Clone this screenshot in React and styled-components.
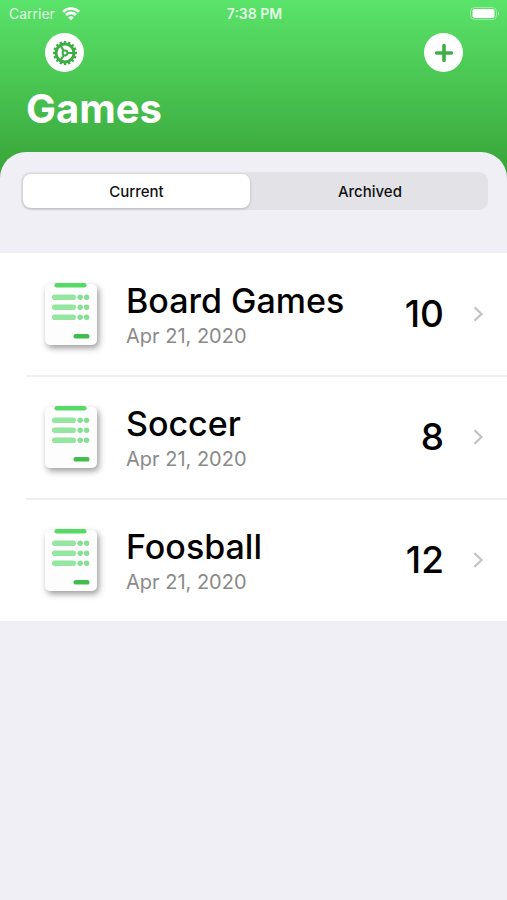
import * as React from "react";
import styled, { createGlobalStyle } from "styled-components";

const GlobalStyle = createGlobalStyle`
    * {
        box-sizing: border-box;
    }
    body {
        margin: 0;
        background: #f0eff5;
        font-family: Inter, "Liberation Sans", sans-serif;
        color: #000;
    }
`;

const Screen = styled.div`
    min-height: 100vh;
    display: flex;
    flex-direction: column;
    background: linear-gradient(#5ae36a, #37a337 178px);
`;

const StatusBar = styled.div`
    display: grid;
    grid-template-columns: 1fr auto 1fr;
    align-items: center;
    height: 28px;
    padding: 0 7px 0 9px;
    color: rgba(255, 255, 255, 0.85);
    font-size: 14px;
    line-height: 20px;
`;

const Carrier = styled.div`
    display: flex;
    align-items: center;
    gap: 7px;
`;

const Clock = styled.time`
    font-weight: 600;
`;

const Battery = styled.svg`
    justify-self: end;
`;

const Toolbar = styled.nav`
    display: flex;
    justify-content: space-between;
    padding: 5px 44px 0 45px;
`;

const RoundButton = styled.button`
    display: flex;
    align-items: center;
    justify-content: center;
    width: 39px;
    height: 39px;
    padding: 0;
    border: none;
    border-radius: 50%;
    background: #fff;
    color: #3fad45;
    cursor: pointer;
`;

const Title = styled.h1`
    margin: 0;
    padding: 13px 26px 19px;
    font-size: 40px;
    line-height: 48px;
    font-weight: 700;
    color: #fff;
`;

const Sheet = styled.main`
    flex: 1;
    padding-top: 20px;
    border-radius: 26px 26px 0 0;
    background: #f0eff5;
`;

const Segments = styled.div`
    display: flex;
    gap: 4px;
    height: 38px;
    margin: 0 19px 43px 21px;
    padding: 2px;
    border-radius: 9px;
    background: #e3e2e7;
`;

const Segment = styled.button`
    flex: ${(props) => (props.$active ? "0 0 49%" : "1")};
    padding: 0;
    border: none;
    border-radius: 8px;
    background: ${(props) => (props.$active ? "#fff" : "transparent")};
    box-shadow: ${(props) => (props.$active ? "0 1px 3px rgba(0, 0, 0, 0.2)" : "none")};
    font-family: inherit;
    font-size: 15px;
    font-weight: 500;
    color: #111;
    cursor: pointer;
`;

const GameList = styled.ul`
    margin: 0;
    padding: 0;
    list-style: none;
    background: #fff;
`;

const GameItem = styled.li`
    & + & > a::before {
        content: "";
        position: absolute;
        top: -1px;
        left: 26px;
        right: 0;
        height: 2px;
        background: #f0f0f1;
    }
`;

const GameLink = styled.a`
    position: relative;
    display: flex;
    align-items: center;
    height: 122px;
    margin-bottom: 1px;
    padding: 0 22px 0 35px;
    color: inherit;
    text-decoration: none;
`;

const GameText = styled.div`
    flex: 1;
    margin-left: 18px;
`;

const GameName = styled.h2`
    margin: 0;
    font-size: 34px;
    line-height: 44px;
    font-weight: 500;
`;

const GameDate = styled.p`
    margin: 0;
    font-size: 20px;
    line-height: 26px;
    color: #8a8a8a;
`;

const Count = styled.span`
    margin-right: 27px;
    font-size: 37px;
    line-height: 44px;
    font-weight: 500;
`;

function WifiIcon() {
    return (
        <svg width="18" height="14" viewBox="0 0 18 14" fill="none" stroke="#fff" strokeWidth="2.6" aria-hidden="true">
            <path d="M1 4.8C5.4.4 12.6.4 17 4.8" />
            <path d="M4 8c2.8-2.8 7.2-2.8 10 0" />
            <path d="M6.2 10.4c1.6-1.5 4-1.5 5.6 0L9 13.2z" fill="#fff" stroke="none" />
        </svg>
    );
}

function BatteryIcon() {
    return (
        <Battery width="30" height="14" viewBox="0 0 30 14" role="img" aria-label="Battery full">
            <rect x="0.5" y="0.5" width="26" height="12" rx="4" fill="none" stroke="#fff" strokeOpacity="0.4" />
            <rect x="2.5" y="2" width="22" height="9" rx="2" fill="#fff" />
            <path d="M28 4.5c1.6.5 1.6 3.5 0 4z" fill="#fff" fillOpacity="0.5" />
        </Battery>
    );
}

function GearIcon() {
    const teeth = Array.from({ length: 16 }, (_, i) => i * 22.5);
    return (
        <svg width="26" height="26" viewBox="-13 -13 26 26" fill="none" stroke="currentColor" strokeWidth="2.2" aria-hidden="true">
            <circle r="9" strokeWidth="3" />
            {teeth.map((angle) => (
                <path key={angle} d="M9 0H12" transform={`rotate(${angle})`} strokeWidth="2.4" />
            ))}
            <circle r="2.4" strokeWidth="2" />
            <path d="M2.5 0H9M-1.3-2.2L-4.6-7.8M-1.3 2.2L-4.6 7.8" />
        </svg>
    );
}

function PlusIcon() {
    return (
        <svg width="20" height="20" viewBox="0 0 20 20" fill="none" stroke="currentColor" strokeWidth="3.6" strokeLinecap="round" aria-hidden="true">
            <path d="M10 2.6v14.8M2.6 10h14.8" />
        </svg>
    );
}

const SheetDrawing = styled.svg`
    flex: none;
    overflow: visible;

    .paper {
        filter: drop-shadow(2px 3px 3px rgba(0, 0, 0, 0.4));
    }
`;

function ScoreSheetIcon() {
    return (
        <SheetDrawing width="73" height="80" viewBox="0 0 73 80" aria-hidden="true">
            <rect className="paper" x="10" y="10" width="52" height="61" rx="5" fill="#fdfdfd" />
            <rect x="19.5" y="9" width="32" height="4.5" rx="2.2" fill="#55da66" />
            {[20.5, 30.5, 40.5].map((y) => (
                <g key={y} fill="#94e6a0">
                    <rect x="17" y={y} width="24" height="5.6" rx="2.8" />
                    <circle cx="45.2" cy={y + 2.8} r="2.7" fill="#84e092" />
                    <circle cx="51.6" cy={y + 2.8} r="2.7" fill="#84e092" />
                </g>
            ))}
            <rect x="38.5" y="60" width="16" height="4.6" rx="2.2" fill="#3fbd4f" />
        </SheetDrawing>
    );
}

function ChevronIcon() {
    return (
        <svg width="14" height="18" viewBox="0 0 14 18" fill="none" stroke="#c2c2c5" strokeWidth="2.2" aria-hidden="true">
            <path d="M3.5 2.2L10.5 9l-7 6.8" />
        </svg>
    );
}

const games = [
    { name: "Board Games", date: "Apr 21, 2020", count: 10 },
    { name: "Soccer", date: "Apr 21, 2020", count: 8 },
    { name: "Foosball", date: "Apr 21, 2020", count: 12 },
];

export default function App() {
    const [tab, setTab] = React.useState("Current");

    return (
        <>
            <GlobalStyle />
            <Screen>
                <StatusBar>
                    <Carrier>
                        Carrier
                        <WifiIcon />
                    </Carrier>
                    <Clock>7:38 PM</Clock>
                    <BatteryIcon />
                </StatusBar>
                <Toolbar>
                    <RoundButton aria-label="Settings">
                        <GearIcon />
                    </RoundButton>
                    <RoundButton aria-label="Add game">
                        <PlusIcon />
                    </RoundButton>
                </Toolbar>
                <Title>Games</Title>
                <Sheet>
                    <Segments>
                        {["Current", "Archived"].map((name) => (
                            <Segment key={name} $active={tab === name} aria-pressed={tab === name} onClick={() => setTab(name)}>
                                {name}
                            </Segment>
                        ))}
                    </Segments>
                    <GameList>
                        {games.map((game) => (
                            <GameItem key={game.name}>
                                <GameLink href="#">
                                    <ScoreSheetIcon />
                                    <GameText>
                                        <GameName>{game.name}</GameName>
                                        <GameDate>{game.date}</GameDate>
                                    </GameText>
                                    <Count>{game.count}</Count>
                                    <ChevronIcon />
                                </GameLink>
                            </GameItem>
                        ))}
                    </GameList>
                </Sheet>
            </Screen>
        </>
    );
}
